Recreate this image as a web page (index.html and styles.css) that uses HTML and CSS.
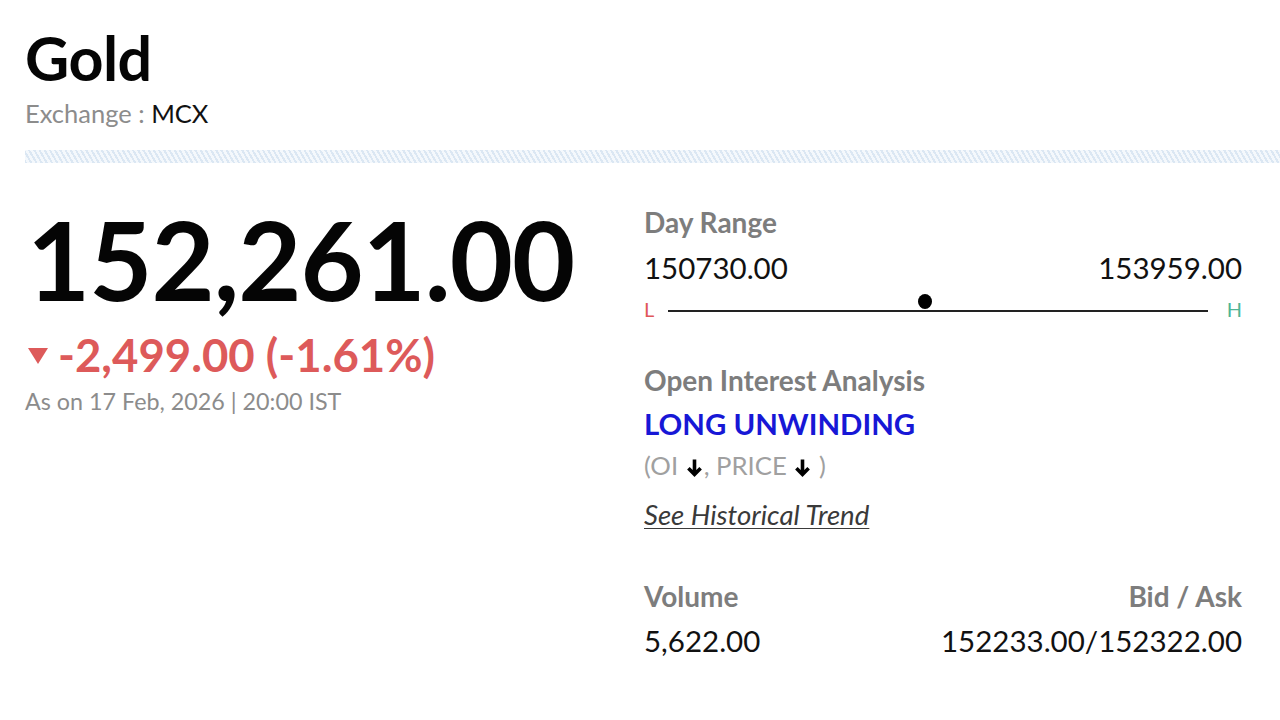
FILE: index.html
```html
<!DOCTYPE html>
<html>
<head>
<meta charset="utf-8">
<link rel="stylesheet" href="styles.css">
</head>
<body>
<div class="page">
  <header class="head">
    <h1 class="title">Gold</h1>
    <div class="exchange"><span class="ex-label">Exchange :</span> <span class="ex-value">MCX</span></div>
  </header>
  <div class="stripes"></div>
  <div class="main">
    <section class="left">
      <div class="price">152,261.00</div>
      <div class="change"><span class="tri"></span>-2,499.00 (-1.61%)</div>
      <div class="asof">As on 17 Feb, 2026 | 20:00 IST</div>
    </section>
    <section class="right">
      <div class="label">Day Range</div>
      <div class="row values">
        <span>150730.00</span>
        <span>153959.00</span>
      </div>
      <div class="range">
        <span class="lo">L</span>
        <div class="track"><span class="dot" style="left:47.6%"></span></div>
        <span class="hi">H</span>
      </div>
      <div class="label oi-label">Open Interest Analysis</div>
      <div class="oi">LONG UNWINDING</div>
      <div class="oi-sub">(OI <svg class="arr" viewBox="0 0 16 18"><path d="M8 1.5V15.5M2.2 9.8L8 15.5l5.8-5.7" fill="none" stroke="#000" stroke-width="3.4"/></svg>, PRICE <svg class="arr" viewBox="0 0 16 18"><path d="M8 1.5V15.5M2.2 9.8L8 15.5l5.8-5.7" fill="none" stroke="#000" stroke-width="3.4"/></svg> )</div>
      <a class="trend" href="#">See Historical Trend</a>
      <div class="row label vol-label">
        <span>Volume</span>
        <span>Bid / Ask</span>
      </div>
      <div class="row values vol-values">
        <span>5,622.00</span>
        <span>152233.00/152322.00</span>
      </div>
    </section>
  </div>
</div>
</body>
</html>
```
FILE: styles.css
```css
* { box-sizing: border-box; }
html, body { margin: 0; padding: 0; background: #fff; }
body { font-family: Lato, "Open Sans", sans-serif; color: #111; }
.page { padding: 20px 0 0 25px; }
.title { margin: 0; font-size: 61px; font-weight: 700; line-height: 76px; color: #050505; letter-spacing: -0.5px; }
.exchange { font-size: 25.5px; line-height: 30px; margin-top: 2px; }
.ex-label { color: #8c8c8c; }
.ex-value { color: #111; }
.stripes {
  margin-top: 22px;
  height: 13px;
  background: repeating-linear-gradient(60deg, #dbe7f3 0 2px, #f4f8fc 2px 4.5px);
}
.main { display: flex; margin-top: 41px; }
.left { width: 619px; }
.price { font-size: 109px; font-weight: 700; line-height: 110px; color: #050505; letter-spacing: -1px; margin-left: 2px; }
.change { display: flex; align-items: center; color: #dd5a5a; font-size: 45.5px; font-weight: 700; line-height: 50px; margin-top: 16px; }
.tri { width: 0; height: 0; border-left: 10px solid transparent; border-right: 10px solid transparent; border-top: 16px solid #dd5a5a; margin: 1px 10px 0 3px; }
.asof { color: #8c8c8c; font-size: 23.3px; line-height: 28px; margin-top: 7px; }
.right { width: 598px; padding-top: 1px; }
.label { color: #7d7d7d; font-weight: 700; font-size: 28px; line-height: 34px; }
.row { display: flex; justify-content: space-between; }
.values { font-size: 29.5px; line-height: 34px; color: #111; margin-top: 12px; }
.range { display: flex; align-items: center; margin-top: 12px; height: 24px; }
.lo { color: #e0575a; font-size: 20px; width: 24px; }
.hi { color: #4fb596; font-size: 20px; width: 34px; text-align: right; }
.track { position: relative; flex: 1; height: 2px; background: #222; margin-top: 3px; }
.dot { position: absolute; top: -16px; width: 14px; height: 15px; border-radius: 50%; background: #000; transform: translateX(-50%); }
.oi-label { margin-top: 42px; }
.oi { color: #1717d6; font-size: 29.4px; font-weight: 700; line-height: 36px; margin-top: 9px; }
.oi-sub { color: #a0a0a0; font-size: 25.7px; line-height: 30px; margin-top: 8px; }
.arr { width: 17px; height: 19px; vertical-align: -2px; margin: 0 1px; }
.trend { display: inline-block; color: #3a3a3a; font-style: italic; font-size: 27.6px; line-height: 34px; margin-top: 18px; text-decoration: underline; text-underline-offset: 3px; text-decoration-thickness: 1px; }
.vol-label { margin-top: 47px; }
.vol-values { margin-top: 11px; }
```
